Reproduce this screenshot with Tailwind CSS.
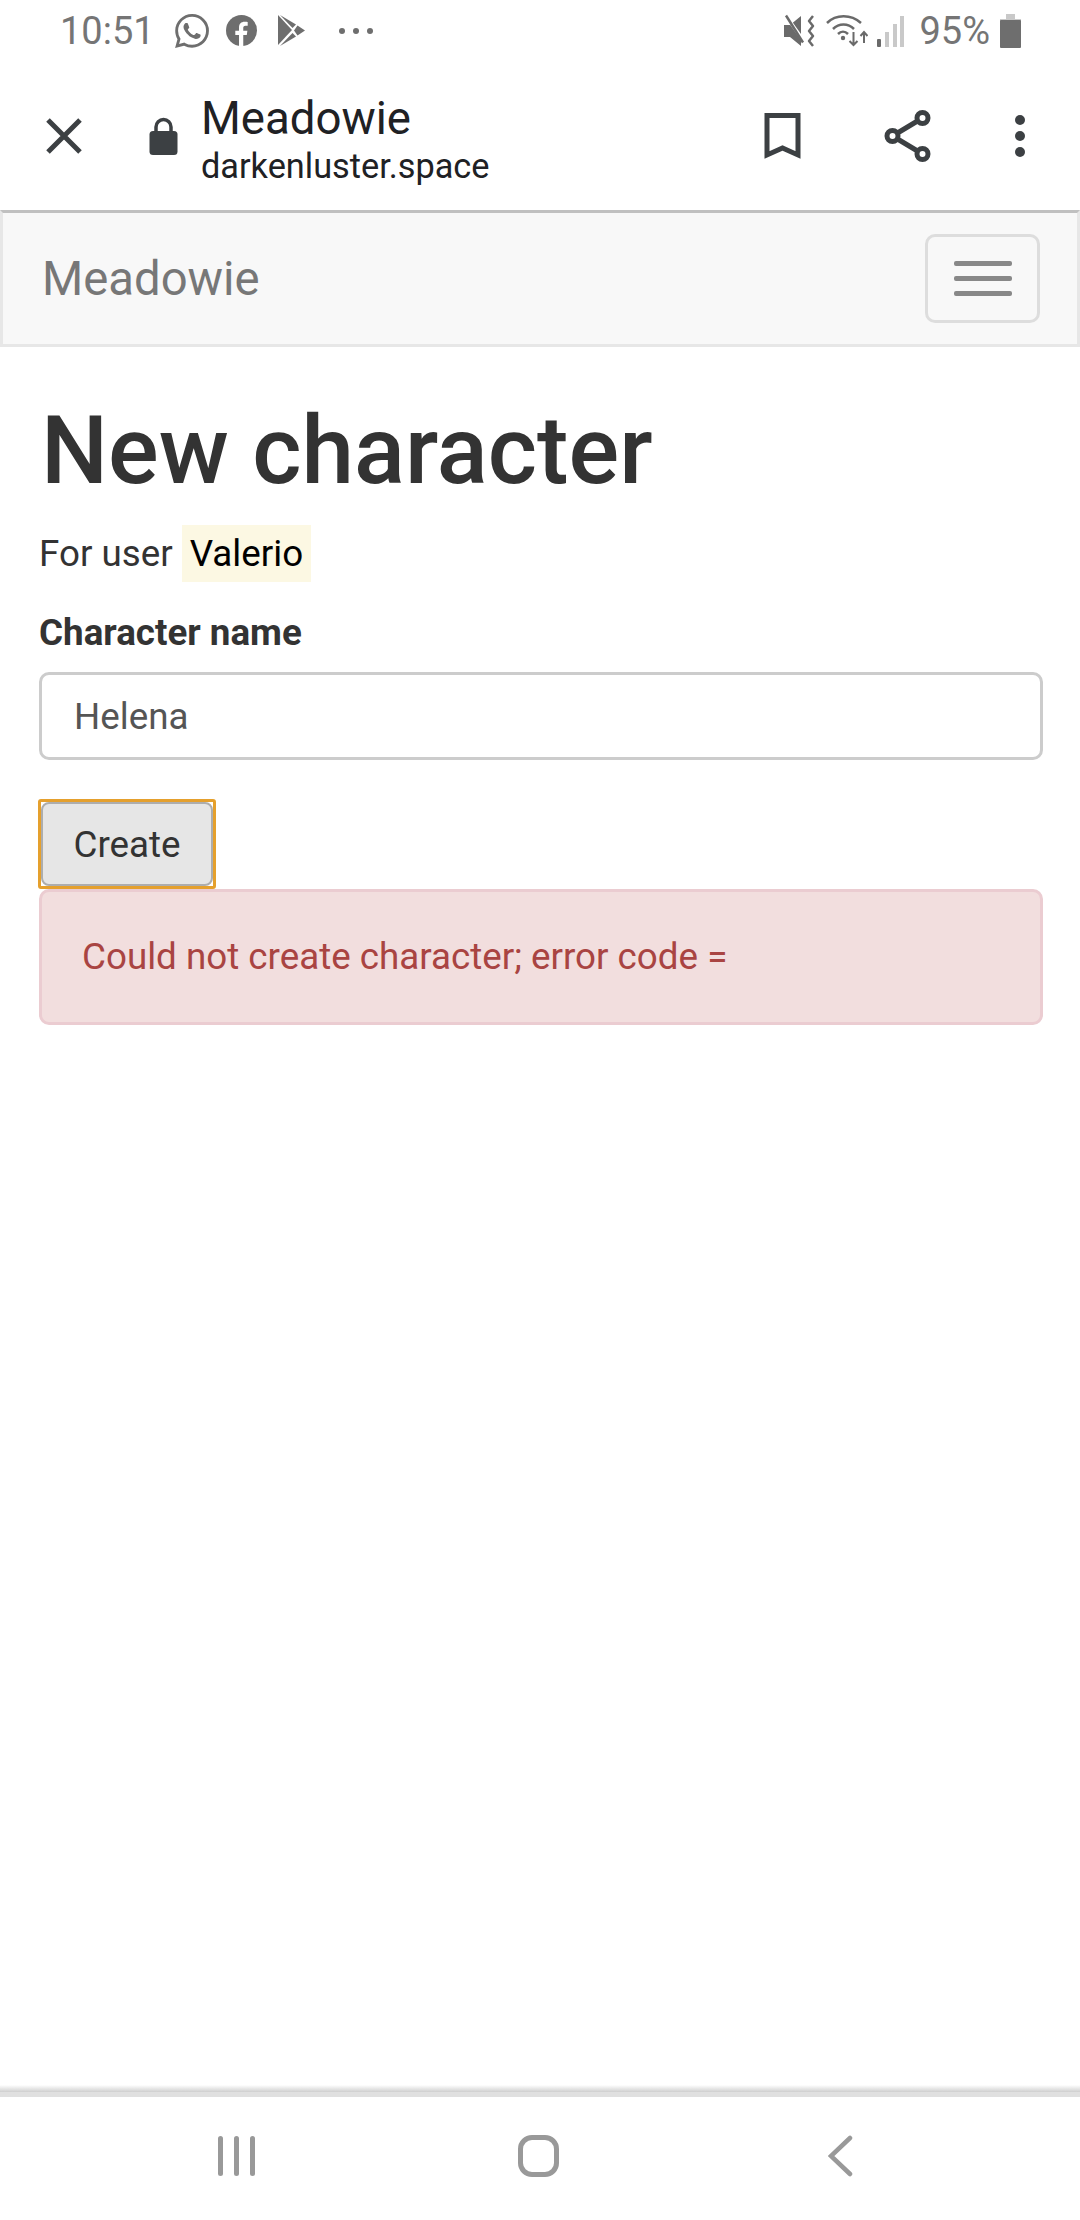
<!DOCTYPE html>
<html>
<head>
<meta charset="utf-8">
<script src="https://cdn.jsdelivr.net/npm/@tailwindcss/browser@4"></script>
</head>
<body class="bg-white">
<div class="w-[1080px] h-[2220px] flex flex-col bg-white overflow-hidden font-['Roboto',sans-serif]">
  <!-- status bar -->
  <div class="h-[56px] pt-[5px] flex items-center pl-[60px] text-[#757575] shrink-0">
    <span class="text-[38px] leading-[60px] w-[115px]">10:51</span>
    <svg class="w-[34px] h-[34px] shrink-0" viewBox="0 0 24 24" fill="#6e6e6e"><path d="M17.472 14.382c-.297-.149-1.758-.867-2.03-.967-.273-.099-.471-.148-.67.15-.197.297-.767.966-.94 1.164-.173.199-.347.223-.644.075-.297-.15-1.255-.463-2.39-1.475-.883-.788-1.48-1.761-1.653-2.059-.173-.297-.018-.458.13-.606.134-.133.298-.347.446-.52.149-.174.198-.298.298-.497.099-.198.05-.371-.025-.52-.075-.149-.669-1.612-.916-2.207-.242-.579-.487-.5-.669-.51-.173-.008-.371-.01-.57-.01-.198 0-.52.074-.792.372-.272.297-1.04 1.016-1.04 2.479 0 1.462 1.065 2.875 1.213 3.074.149.198 2.096 3.2 5.077 4.487.709.306 1.262.489 1.694.625.712.227 1.36.195 1.871.118.571-.085 1.758-.719 2.006-1.413.248-.694.248-1.289.173-1.413-.074-.124-.272-.198-.57-.347m-5.421 7.403h-.004a9.87 9.87 0 01-5.031-1.378l-.361-.214-3.741.982.998-3.648-.235-.374a9.86 9.86 0 01-1.51-5.26c.001-5.45 4.436-9.884 9.888-9.884 2.64 0 5.122 1.03 6.988 2.898a9.825 9.825 0 012.893 6.994c-.003 5.45-4.437 9.884-9.885 9.884m8.413-18.297A11.815 11.815 0 0012.05 0C5.495 0 .16 5.335.157 11.892c0 2.096.547 4.142 1.588 5.945L.057 24l6.305-1.654a11.882 11.882 0 005.683 1.448h.005c6.554 0 11.89-5.335 11.893-11.893a11.821 11.821 0 00-3.48-8.413z"/></svg>
    <svg class="w-[31px] h-[31px] ml-[17px] shrink-0" viewBox="0 0 30 30"><circle cx="15" cy="15" r="15" fill="#6e6e6e"/><path d="M12.6 30V19.4H9v-4.2h3.6v-3c0-3.6 2.1-5.6 5.4-5.6 1.5 0 2.8.2 3 .2v3.7h-2.1c-1.7 0-2.2 1-2.2 2.1v2.6h4l-.6 4.2h-3.4V30z" fill="#fff"/></svg>
    <svg class="w-[28px] h-[32px] ml-[21px] shrink-0" viewBox="0 0 28 32"><path d="M0 0L14 15 0 30z" fill="#6e6e6e"/><path d="M2 0L18 9.5 14.5 13z" fill="#6e6e6e"/><path d="M2 31L18 21.5 14.5 18z" fill="#6e6e6e"/><path d="M19.5 10.5L27 15.500 19.500 20.500 16 15.500z" fill="#6e6e6e"/></svg>
    <div class="flex gap-[8px] ml-[33px]"><span class="w-[6px] h-[6px] rounded-full bg-[#6e6e6e]"></span><span class="w-[6px] h-[6px] rounded-full bg-[#6e6e6e]"></span><span class="w-[6px] h-[6px] rounded-full bg-[#6e6e6e]"></span></div>
    <div class="flex-1"></div>
    <svg class="w-[32px] h-[34px] shrink-0" viewBox="0 0 32 34" fill="none"><path d="M0 11h6l11-9v30L6 23H0z" fill="#6a6a6a"/><path d="M2 2l20 28" stroke="#fff" stroke-width="3.500"/><path d="M2 1.500l17 27" stroke="#6a6a6a" stroke-width="2.500"/><path d="M29 2l-4 5 4 5-4 5 4 5-4 5 4 5" stroke="#6a6a6a" stroke-width="2.500" stroke-linejoin="round"/></svg>
    <svg class="w-[42px] h-[34px] ml-[10px] shrink-0" viewBox="0 0 42 34" fill="none" stroke="#6a6a6a" stroke-width="2.500"><path d="M1 9C10 0 25 0 35 9"/><path d="M7 15c6-6 15-6 21 0"/><path d="M12 20c3-3 7-3 10 0"/><circle cx="17" cy="24" r="2.200" fill="#6a6a6a" stroke="none"/><path d="M27.500 18v13M23.500 27l4 4 4-4" stroke-width="2"/><path d="M38 29V18M34.500 22l3.500-4 3.500 4" stroke-width="2"/></svg>
    <svg class="w-[28px] h-[34px] ml-[9px] shrink-0" viewBox="0 0 28 34"><rect x="0" y="25" width="4" height="8" rx="1" fill="#6a6a6a"/><rect x="8" y="18" width="4" height="15" fill="#c9c9c9"/><rect x="16" y="10" width="4" height="23" fill="#c9c9c9"/><rect x="23" y="2" width="4" height="31" fill="#c9c9c9"/></svg>
    <span class="text-[38px] leading-[60px] ml-[14px]">95%</span>
    <svg class="w-[21px] h-[34px] ml-[10px] mr-[59px] shrink-0" viewBox="0 0 21 34"><rect x="6" y="0" width="9" height="6" fill="#c9c9c9"/><rect x="0" y="5" width="21" height="5" fill="#c9c9c9"/><rect x="0" y="6" width="21" height="28" rx="1" fill="#6e6e6e"/></svg>
  </div>
  <!-- browser toolbar -->
  <div class="h-[154px] flex items-center shrink-0 pt-[6px]">
    <svg class="w-[36px] h-[36px] ml-[46px] shrink-0" viewBox="0 0 36 36" fill="none" stroke="#3c4043" stroke-width="5"><path d="M2 2l32 32M34 2L2 34"/></svg>
    <svg class="w-[29px] h-[38px] ml-[67px] shrink-0" viewBox="0 0 28 38"><rect x="0" y="14" width="28" height="24" rx="3.500" fill="#3c4043"/><path d="M6.500 15V10a7.500 7.500 0 0115 0v5" fill="none" stroke="#3c4043" stroke-width="3.500"/></svg>
    <div class="ml-[23px] flex flex-col pt-[8px]">
      <span class="text-[45.6px] leading-[52px] text-[#202124]">Meadowie</span>
      <span class="text-[34.3px] leading-[42px] text-[#202124]">darkenluster.space</span>
    </div>
    <div class="flex-1"></div>
    <svg class="w-[37px] h-[48px] shrink-0" viewBox="0 0 36 48" fill="none" stroke="#3c4043" stroke-width="5"><path d="M2.500 43V3.500h31V43L18 36z"/></svg>
    <svg class="w-[47px] h-[54px] ml-[83px] shrink-0" viewBox="0 0 46 54" fill="none" stroke="#3c4043" stroke-width="5"><circle cx="38" cy="9" r="5.500"/><circle cx="8" cy="27" r="5.500"/><circle cx="38" cy="45" r="5.500"/><path d="M13 24l20-12M13 30l20 12"/></svg>
    <div class="flex flex-col gap-[6px] ml-[84px] mr-[55px] shrink-0"><span class="w-[10px] h-[10px] rounded-full bg-[#3c4043]"></span><span class="w-[10px] h-[10px] rounded-full bg-[#3c4043]"></span><span class="w-[10px] h-[10px] rounded-full bg-[#3c4043]"></span></div>
  </div>
  <!-- navbar -->
  <div class="h-[137px] shrink-0 border-t-[3px] border-t-[#c0c0c0] border-x-[3px] border-x-[#e7e7e7] border-b-[3px] border-b-[#e7e7e7] bg-[#f8f8f8] flex items-center justify-between pl-[39px] pr-[37px]">
    <span class="text-[47.25px] leading-[52px] text-[#777777]">Meadowie</span>
    <div class="w-[115px] h-[89px] border-[3px] border-[#dddddd] rounded-[10px] flex flex-col items-center justify-center gap-[10px]">
      <span class="w-[58px] h-[5px] rounded-[2px] bg-[#888888]"></span>
      <span class="w-[58px] h-[5px] rounded-[2px] bg-[#888888]"></span>
      <span class="w-[58px] h-[5px] rounded-[2px] bg-[#888888]"></span>
    </div>
  </div>
  <!-- content -->
  <div class="flex-1 pl-[39px] pr-[37px] flex flex-col">
    <h1 class="mt-[52px] pl-[2px] text-[94.5px] leading-[103px] font-medium text-[#333333]">New character</h1>
    <p class="mt-[25px] text-[36.75px] leading-[53px] text-[#333333]">For user <mark class="bg-[#fcf8e3] text-black px-[8px] py-[7px]">Valerio</mark></p>
    <label class="mt-[26px] text-[36.75px] leading-[53px] font-bold text-[#333333]">Character name</label>
    <div class="mt-[13px] h-[88px] border-[3px] border-[#cccccc] rounded-[10px] flex items-center pl-[32px] pt-[2px] text-[36.75px] text-[#555555] bg-white">Helena</div>
    <div class="mt-[39px] -ml-[1px] w-[178px] h-[90px] border-[3px] border-[#e5a02d] rounded-[3px] shrink-0">
      <button class="block w-full h-full border-[2px] border-[#adadad] rounded-[8px] bg-[#e6e6e6] pt-[2px] text-[36.75px] text-[#333333]">Create</button>
    </div>
    <div class="h-[136px] border-[3px] border-[#ebccd1] rounded-[10px] bg-[#f2dede] text-[#a94442] text-[36.75px] flex items-center pl-[40px]">Could not create character; error code =</div>
  </div>
  <!-- bottom nav -->
  <div class="h-[135px] shrink-0 flex flex-col">
    <div class="h-[7px] bg-gradient-to-b from-white to-[#cfcfcf]"></div>
    <div class="h-[5px] bg-[#e0e0e0]"></div>
    <div class="flex-1 flex items-center pl-[218px] pb-[5px]">
      <div class="flex gap-[11px]"><span class="w-[5px] h-[40px] rounded-full bg-[#999999]"></span><span class="w-[5px] h-[40px] rounded-full bg-[#999999]"></span><span class="w-[5px] h-[40px] rounded-full bg-[#999999]"></span></div>
      <div class="w-[41px] h-[42px] ml-[263px] border-[5px] border-[#999999] rounded-[14px]"></div>
      <svg class="w-[25px] h-[42px] ml-[269px]" viewBox="0 0 25 42" fill="none" stroke="#999999" stroke-width="4.500" stroke-linecap="round"><path d="M22 3L3 21l19 18"/></svg>
    </div>
  </div>
</div>
</body>
</html>
